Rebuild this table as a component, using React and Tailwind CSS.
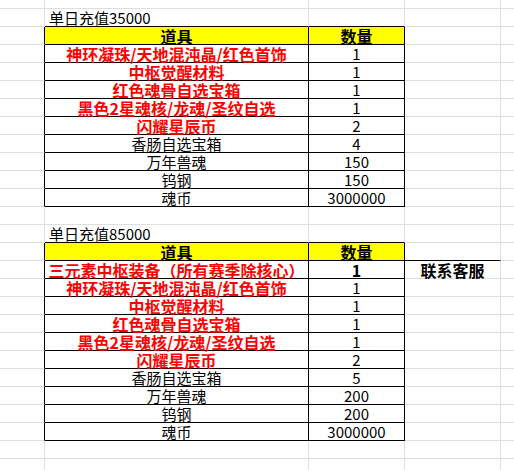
import React from 'react';

const GRAY = 'border-[#dedede]';

function Cell({ w, rb, bb, align = 'center', className = '', children }) {
  const r = rb ? 'border-r-black' : 'border-r-[#dedede]';
  const b = bb ? 'border-b-black' : 'border-b-[#dedede]';
  const j = align === 'left' ? 'justify-start pl-[4px]' : 'justify-center';
  return (
    <div className={`shrink-0 h-full flex items-center ${j} border-r border-b ${r} ${b} whitespace-nowrap overflow-visible ${w} ${className}`}>
      {children}
    </div>
  );
}

const t1 = [
  ['神环凝珠/天地混沌晶/红色首饰', '1', true],
  ['中枢觉醒材料', '1', true],
  ['红色魂骨自选宝箱', '1', true],
  ['黑色2星魂核/龙魂/圣纹自选', '1', true],
  ['闪耀星辰币', '2', true],
  ['香肠自选宝箱', '4', false],
  ['万年兽魂', '150', false],
  ['钨钢', '150', false],
  ['魂币', '3000000', false],
];

const t2 = [
  ['神环凝珠/天地混沌晶/红色首饰', '1', true],
  ['中枢觉醒材料', '1', true],
  ['红色魂骨自选宝箱', '1', true],
  ['黑色2星魂核/龙魂/圣纹自选', '1', true],
  ['闪耀星辰币', '2', true],
  ['香肠自选宝箱', '5', false],
  ['万年兽魂', '200', false],
  ['钨钢', '200', false],
  ['魂币', '3000000', false],
];

const redCls = "text-[#ff0000] font-bold text-[16px]";
const normCls = "text-black text-[15px]";

function Row({ h = 'h-[18px]', a = {}, b = {}, c = {}, d = {} }) {
  return (
    <div className={`flex shrink-0 ${h}`}>
      <Cell w="w-[45px]" rb={a.rb} bb={a.bb} />
      <Cell w="w-[264px]" rb={b.rb} bb={b.bb} align={b.align} className={b.cls}>{b.text}</Cell>
      <Cell w="w-[96px]" rb={c.rb} bb={c.bb} className={c.cls}>{c.text}</Cell>
      <Cell w="w-[96px]" rb={d.rb} bb={d.bb} className={d.cls}>{d.text}</Cell>
      <div className={`flex-1 h-full border-b ${GRAY}`} />
    </div>
  );
}

function Table({ title, items, extra }) {
  return (
    <>
      <Row
        b={{ bb: true, align: 'left', text: title, cls: 'text-[15px] text-black items-end pb-[1px]' }}
        c={{ bb: true }}
      />
      <Row
        a={{ rb: true }}
        b={{ rb: true, bb: true, text: '道具', cls: 'bg-[#ffff00] font-bold text-[16px] text-black' }}
        c={{ rb: true, bb: true, text: '数量', cls: 'bg-[#ffff00] font-bold text-[16px] text-black' }}
        d={{ bb: !!extra }}
      />
      {extra && (
        <Row
          a={{ rb: true }}
          b={{ rb: true, bb: true, text: '三元素中枢装备（所有赛季除核心）', cls: redCls }}
          c={{ rb: true, bb: true, text: '1', cls: 'font-bold text-[16px] text-black' }}
          d={{ text: '联系客服', cls: 'font-bold text-[16px] text-black' }}
        />
      )}
      {items.map(([name, qty, red], i) => (
        <Row
          key={i}
          a={{ rb: true }}
          b={{ rb: true, bb: true, text: name, cls: red ? redCls : normCls }}
          c={{ rb: true, bb: true, text: qty, cls: normCls }}
        />
      ))}
    </>
  );
}

export default function App() {
  return (
    <div
      className="w-[514px] h-[470px] overflow-hidden bg-white flex flex-col leading-none"
      style={{ fontFamily: '"Noto Sans CJK SC", "Noto Sans", sans-serif' }}
    >
      <Row h="h-[9px]" />
      <Table title="单日充值35000" items={t1} />
      <Row />
      <Table title="单日充值85000" items={t2} extra />
      <Row />
      <Row h="h-[20px]" />
    </div>
  );
}
